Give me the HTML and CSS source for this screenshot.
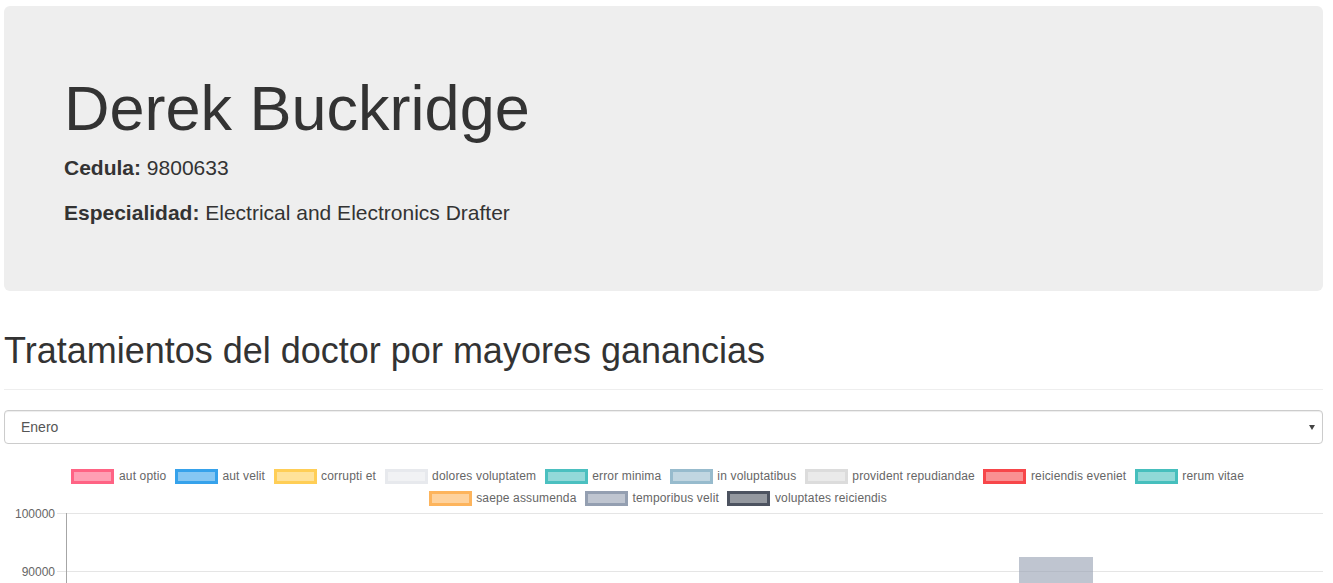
FILE: index.html
```html
<!DOCTYPE html>
<html lang="es">
<head>
<meta charset="utf-8">
<title>Derek Buckridge</title>
<link rel="stylesheet" href="styles.css">
</head>
<body>
<div class="wrap">
  <div class="jumbotron">
    <h1>Derek Buckridge</h1>
    <p><strong>Cedula:</strong> 9800633</p>
    <p><strong>Especialidad:</strong> Electrical and Electronics Drafter</p>
  </div>

  <div class="page-header">
    <h1>Tratamientos del doctor por mayores ganancias</h1>
  </div>

  <div class="select-wrap">
    <select class="form-control">
      <option>Enero</option>
      <option>Febrero</option>
      <option>Marzo</option>
    </select>
  </div>

  <div class="chart">
    <div class="legend">
      <span class="item"><i class="box c1"></i>aut optio</span>
      <span class="item"><i class="box c2"></i>aut velit</span>
      <span class="item"><i class="box c3"></i>corrupti et</span>
      <span class="item"><i class="box c4"></i>dolores voluptatem</span>
      <span class="item"><i class="box c5"></i>error minima</span>
      <span class="item"><i class="box c6"></i>in voluptatibus</span>
      <span class="item"><i class="box c7"></i>provident repudiandae</span>
      <span class="item"><i class="box c8"></i>reiciendis eveniet</span>
      <span class="item"><i class="box c9"></i>rerum vitae</span>
      <span class="break"></span>
      <span class="item"><i class="box c10"></i>saepe assumenda</span>
      <span class="item"><i class="box c11"></i>temporibus velit</span>
      <span class="item"><i class="box c12"></i>voluptates reiciendis</span>
    </div>
    <svg class="plot" width="1319" height="90" viewBox="0 0 1319 90">
      <line class="grid" x1="53" y1="12.5" x2="1319" y2="12.5"/>
      <line class="grid" x1="53" y1="70.5" x2="1319" y2="70.5"/>
      <rect class="bar" x="1015" y="56" width="74" height="40"/>
      <line class="axis" x1="62.5" y1="12" x2="62.5" y2="90"/>
      <text class="tick" x="51" y="16.5">100000</text>
      <text class="tick" x="51" y="74.5">90000</text>
    </svg>
  </div>
</div>
</body>
</html>
```
FILE: styles.css
```css
html, body {
  margin: 0;
  padding: 0;
  overflow: hidden;
}
body {
  font-family: "Liberation Sans", Arial, Helvetica, sans-serif;
  font-size: 14px;
  line-height: 1.42857;
  color: #333;
  background: #fff;
}
.wrap {
  padding: 6px 10px 0 4px;
}
.jumbotron {
  background: #eeeeee;
  border-radius: 6px;
  padding: 48px 60px;
  margin-bottom: 30px;
}
.jumbotron h1 {
  font-size: 63px;
  font-weight: 500;
  line-height: 69px;
  margin: 20px 0 10px;
}
.jumbotron p {
  font-size: 21px;
  line-height: 30px;
  margin: 0 0 15px;
  font-weight: 200;
}
.jumbotron p strong {
  font-weight: 700;
}
.page-header {
  margin: 40px 0 20px;
  padding-bottom: 9px;
  border-bottom: 1px solid #eee;
}
.page-header h1 {
  font-size: 36px;
  font-weight: 500;
  line-height: 39px;
  margin: 20px 0 10px;
}
.select-wrap {
  position: relative;
}
.select-wrap::after {
  content: "";
  position: absolute;
  right: 8px;
  top: 15px;
  border-left: 3.5px solid transparent;
  border-right: 3.5px solid transparent;
  border-top: 5px solid #444;
  pointer-events: none;
}
.form-control {
  display: block;
  width: 100%;
  height: 34px;
  padding: 6px 12px 6px 16px;
  font-family: "Liberation Sans", Arial, sans-serif;
  font-size: 14px;
  color: #555;
  background-color: #fff;
  border: 1px solid #ccc;
  border-radius: 4px;
  box-shadow: inset 0 1px 1px rgba(0, 0, 0, .075);
  box-sizing: border-box;
  margin: 0;
  -webkit-appearance: none;
  appearance: none;
}
.chart {
  width: 1319px;
}
.legend {
  display: flex;
  flex-wrap: wrap;
  justify-content: center;
  padding-top: 21px;
  font-size: 12px;
  line-height: 22px;
  color: #666;
  letter-spacing: 0.15px;
}
.break {
  flex-basis: 100%;
  height: 0;
}
.item {
  display: flex;
  align-items: center;
  height: 22px;
  margin-right: 10px;
  white-space: nowrap;
}
.box {
  display: block;
  box-sizing: border-box;
  width: 43px;
  height: 15px;
  margin-left: -1.5px;
  margin-right: 4.5px;
  border: 3px solid;
}
.c1 { border-color: #ff6384; background: #ff9fb4; }
.c2 { border-color: #36a2eb; background: #86c7f3; }
.c3 { border-color: #ffce56; background: #ffe29a; }
.c4 { border-color: #e7e9ed; background: #f1f2f4; }
.c5 { border-color: #4bc0c0; background: #93d9d9; }
.c6 { border-color: #97bbcd; background: #c1d6e1; }
.c7 { border-color: #dcdcdc; background: #eaeaea; }
.c8 { border-color: #f7464a; background: #fa9092; }
.c9 { border-color: #46bfbd; background: #90d9d7; }
.c10 { border-color: #fdb45c; background: #fed29d; }
.c11 { border-color: #949fb1; background: #bfc5d0; }
.c12 { border-color: #4d5360; background: #94989f; }
.plot {
  display: block;
  margin-top: -8px;
}
.grid {
  stroke: #e5e5e5;
  stroke-width: 1;
}
.axis {
  stroke: #a6a6a6;
  stroke-width: 1;
}
.bar {
  fill: rgba(148, 159, 177, 0.6);
}
.tick {
  font-family: "Liberation Sans", Arial, sans-serif;
  font-size: 12px;
  fill: #666;
  text-anchor: end;
}
```
